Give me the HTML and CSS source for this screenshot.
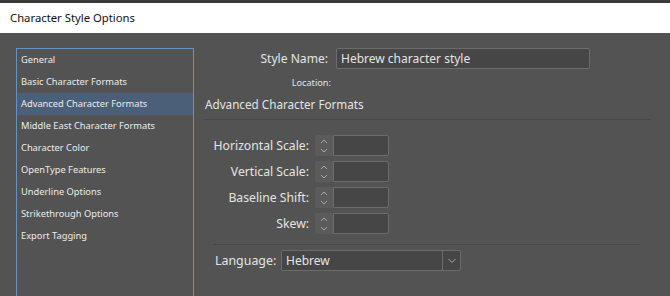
FILE: index.html
```html
<!DOCTYPE html>
<html lang="en">
<head>
    <meta charset="UTF-8">
    <meta name="viewport" content="width=device-width, initial-scale=1.0">
    <title>Character Style Options</title>
    <link rel="stylesheet" href="styles.css">
</head>
<body>
    <div class="dialog">
        <header class="titlebar">Character Style Options</header>

        <div class="dialog__body">
            <!-- CATEGORY LIST -->
            <ul class="cats">
                <li class="cats__item">General</li>
                <li class="cats__item">Basic Character Formats</li>
                <li class="cats__item cats__item--active">Advanced Character Formats</li>
                <li class="cats__item">Middle East Character Formats</li>
                <li class="cats__item">Character Color</li>
                <li class="cats__item">OpenType Features</li>
                <li class="cats__item">Underline Options</li>
                <li class="cats__item">Strikethrough Options</li>
                <li class="cats__item">Export Tagging</li>
            </ul>

            <!-- PANEL -->
            <main class="panel">
                <div class="name-row">
                    <label class="name-row__label">Style Name:</label>
                    <div class="field field--name">Hebrew character style</div>
                </div>
                <div class="loc-row">
                    <span class="loc-row__label">Location:</span>
                </div>
                <h2 class="panel__title">Advanced Character Formats</h2>
                <hr class="rule rule--top">

                <div class="spins">
                    <div class="spin">
                        <label class="spin__label">Horizontal Scale:</label>
                        <span class="spin__arrows">
                            <svg width="10" height="16" viewBox="0 0 10 16"><polyline points="2,5 5,2 8,5"/><polyline points="2,11 5,14 8,11"/></svg>
                        </span>
                        <span class="spin__input"></span>
                    </div>
                    <div class="spin">
                        <label class="spin__label">Vertical Scale:</label>
                        <span class="spin__arrows">
                            <svg width="10" height="16" viewBox="0 0 10 16"><polyline points="2,5 5,2 8,5"/><polyline points="2,11 5,14 8,11"/></svg>
                        </span>
                        <span class="spin__input"></span>
                    </div>
                    <div class="spin">
                        <label class="spin__label">Baseline Shift:</label>
                        <span class="spin__arrows">
                            <svg width="10" height="16" viewBox="0 0 10 16"><polyline points="2,5 5,2 8,5"/><polyline points="2,11 5,14 8,11"/></svg>
                        </span>
                        <span class="spin__input"></span>
                    </div>
                    <div class="spin">
                        <label class="spin__label">Skew:</label>
                        <span class="spin__arrows">
                            <svg width="10" height="16" viewBox="0 0 10 16"><polyline points="2,5 5,2 8,5"/><polyline points="2,11 5,14 8,11"/></svg>
                        </span>
                        <span class="spin__input"></span>
                    </div>
                </div>

                <hr class="rule rule--bottom">

                <div class="lang">
                    <label class="lang__label">Language:</label>
                    <div class="select">
                        <span class="select__value">Hebrew</span>
                        <span class="select__arrow">
                            <svg width="10" height="6" viewBox="0 0 10 6"><polyline points="1.5,1 5,4.5 8.5,1"/></svg>
                        </span>
                    </div>
                </div>
            </main>
        </div>
    </div>
</body>
</html>
```

FILE: styles.css
```css
:root {
    --bg: #535353;
    --field-bg: #464646;
    --field-border: #6c6c6c;
    --text: #e4e4e4;
    --rule: #474747;
}

* {
    box-sizing: border-box;
}

html, body {
    margin: 0;
    height: 100%;
}

body {
    background-color: var(--bg);
    font-family: "Noto Sans", "Open Sans", sans-serif;
    color: var(--text);
    overflow: hidden;
}

.dialog {
    height: 100%;
    border-top: 3px solid #3a3a3a;
    display: flex;
    flex-direction: column;
}

.titlebar {
    height: 30px;
    background-color: #fff;
    color: #111;
    font-size: 11.3px;
    line-height: 30px;
    padding-left: 10px;
}

.dialog__body {
    flex: 1;
    display: flex;
    padding: 15px 0 0 16px;
}

/* category list */
.cats {
    list-style: none;
    margin: 0;
    padding: 0;
    width: 178px;
    border: 1px solid #6793c0;
    border-bottom: 0;
    flex-shrink: 0;
}
.cats__item {
    height: 22px;
    line-height: 22px;
    padding-left: 4px;
    font-size: 9.3px;
    color: #ececec;
    white-space: nowrap;
}
.cats__item--active {
    background-color: #4b6078;
}

/* right side */
.panel {
    flex: 1;
    padding-left: 10px;
    padding-right: 20px;
}

.name-row {
    display: flex;
    align-items: center;
    height: 21px;
}
.name-row__label {
    width: 132px;
    text-align: right;
    font-size: 12.1px;
    padding-right: 8px;
}
.field {
    height: 21px;
    background-color: var(--field-bg);
    border: 1px solid var(--field-border);
    border-radius: 2px;
    font-size: 12px;
    line-height: 19px;
    padding-left: 4px;
}
.field--name {
    width: 254px;
}

.loc-row {
    margin-top: 8px;
    height: 12px;
    display: flex;
}
.loc-row__label {
    width: 127px;
    text-align: right;
    font-size: 9.2px;
    line-height: 12px;
}

.panel__title {
    margin: 7px 0 0 1px;
    font-weight: normal;
    font-size: 11.7px;
    line-height: 16px;
    height: 16px;
}

.rule {
    border: 0;
    height: 1px;
    background-color: var(--rule);
    margin: 0;
}
.rule--top {
    margin-top: 7px;
}
.rule--bottom {
    margin: 10px 10px 0 9px;
}

.spins {
    margin-top: 15px;
    display: flex;
    flex-direction: column;
    gap: 5px;
}
.spin {
    display: flex;
    align-items: center;
    height: 21px;
}
.spin__label {
    width: 111px;
    text-align: right;
    font-size: 12.2px;
    padding-right: 6px;
}
.spin__arrows {
    width: 18px;
    height: 21px;
    background-color: #5b5b5b;
    border-radius: 2px 0 0 2px;
    display: flex;
    align-items: center;
    justify-content: center;
}
.spin__arrows polyline,
.select__arrow polyline {
    fill: none;
    stroke: #a8a8a8;
    stroke-width: 1;
}
.spin__input {
    width: 56px;
    height: 21px;
    background-color: var(--field-bg);
    border: 1px solid var(--field-border);
    border-radius: 0 2px 2px 0;
}

.lang {
    margin-top: 5px;
    display: flex;
    align-items: center;
    height: 21px;
}
.lang__label {
    width: 77px;
    padding-left: 11px;
    font-size: 12.4px;
}
.select {
    width: 180px;
    height: 21px;
    display: flex;
    background-color: var(--field-bg);
    border: 1px solid var(--field-border);
    border-radius: 2px;
}
.select__value {
    flex: 1;
    font-size: 12px;
    line-height: 19px;
    padding-left: 4px;
    border-right: 1px solid var(--field-border);
}
.select__arrow {
    width: 17px;
    display: flex;
    align-items: center;
    justify-content: center;
}
```
